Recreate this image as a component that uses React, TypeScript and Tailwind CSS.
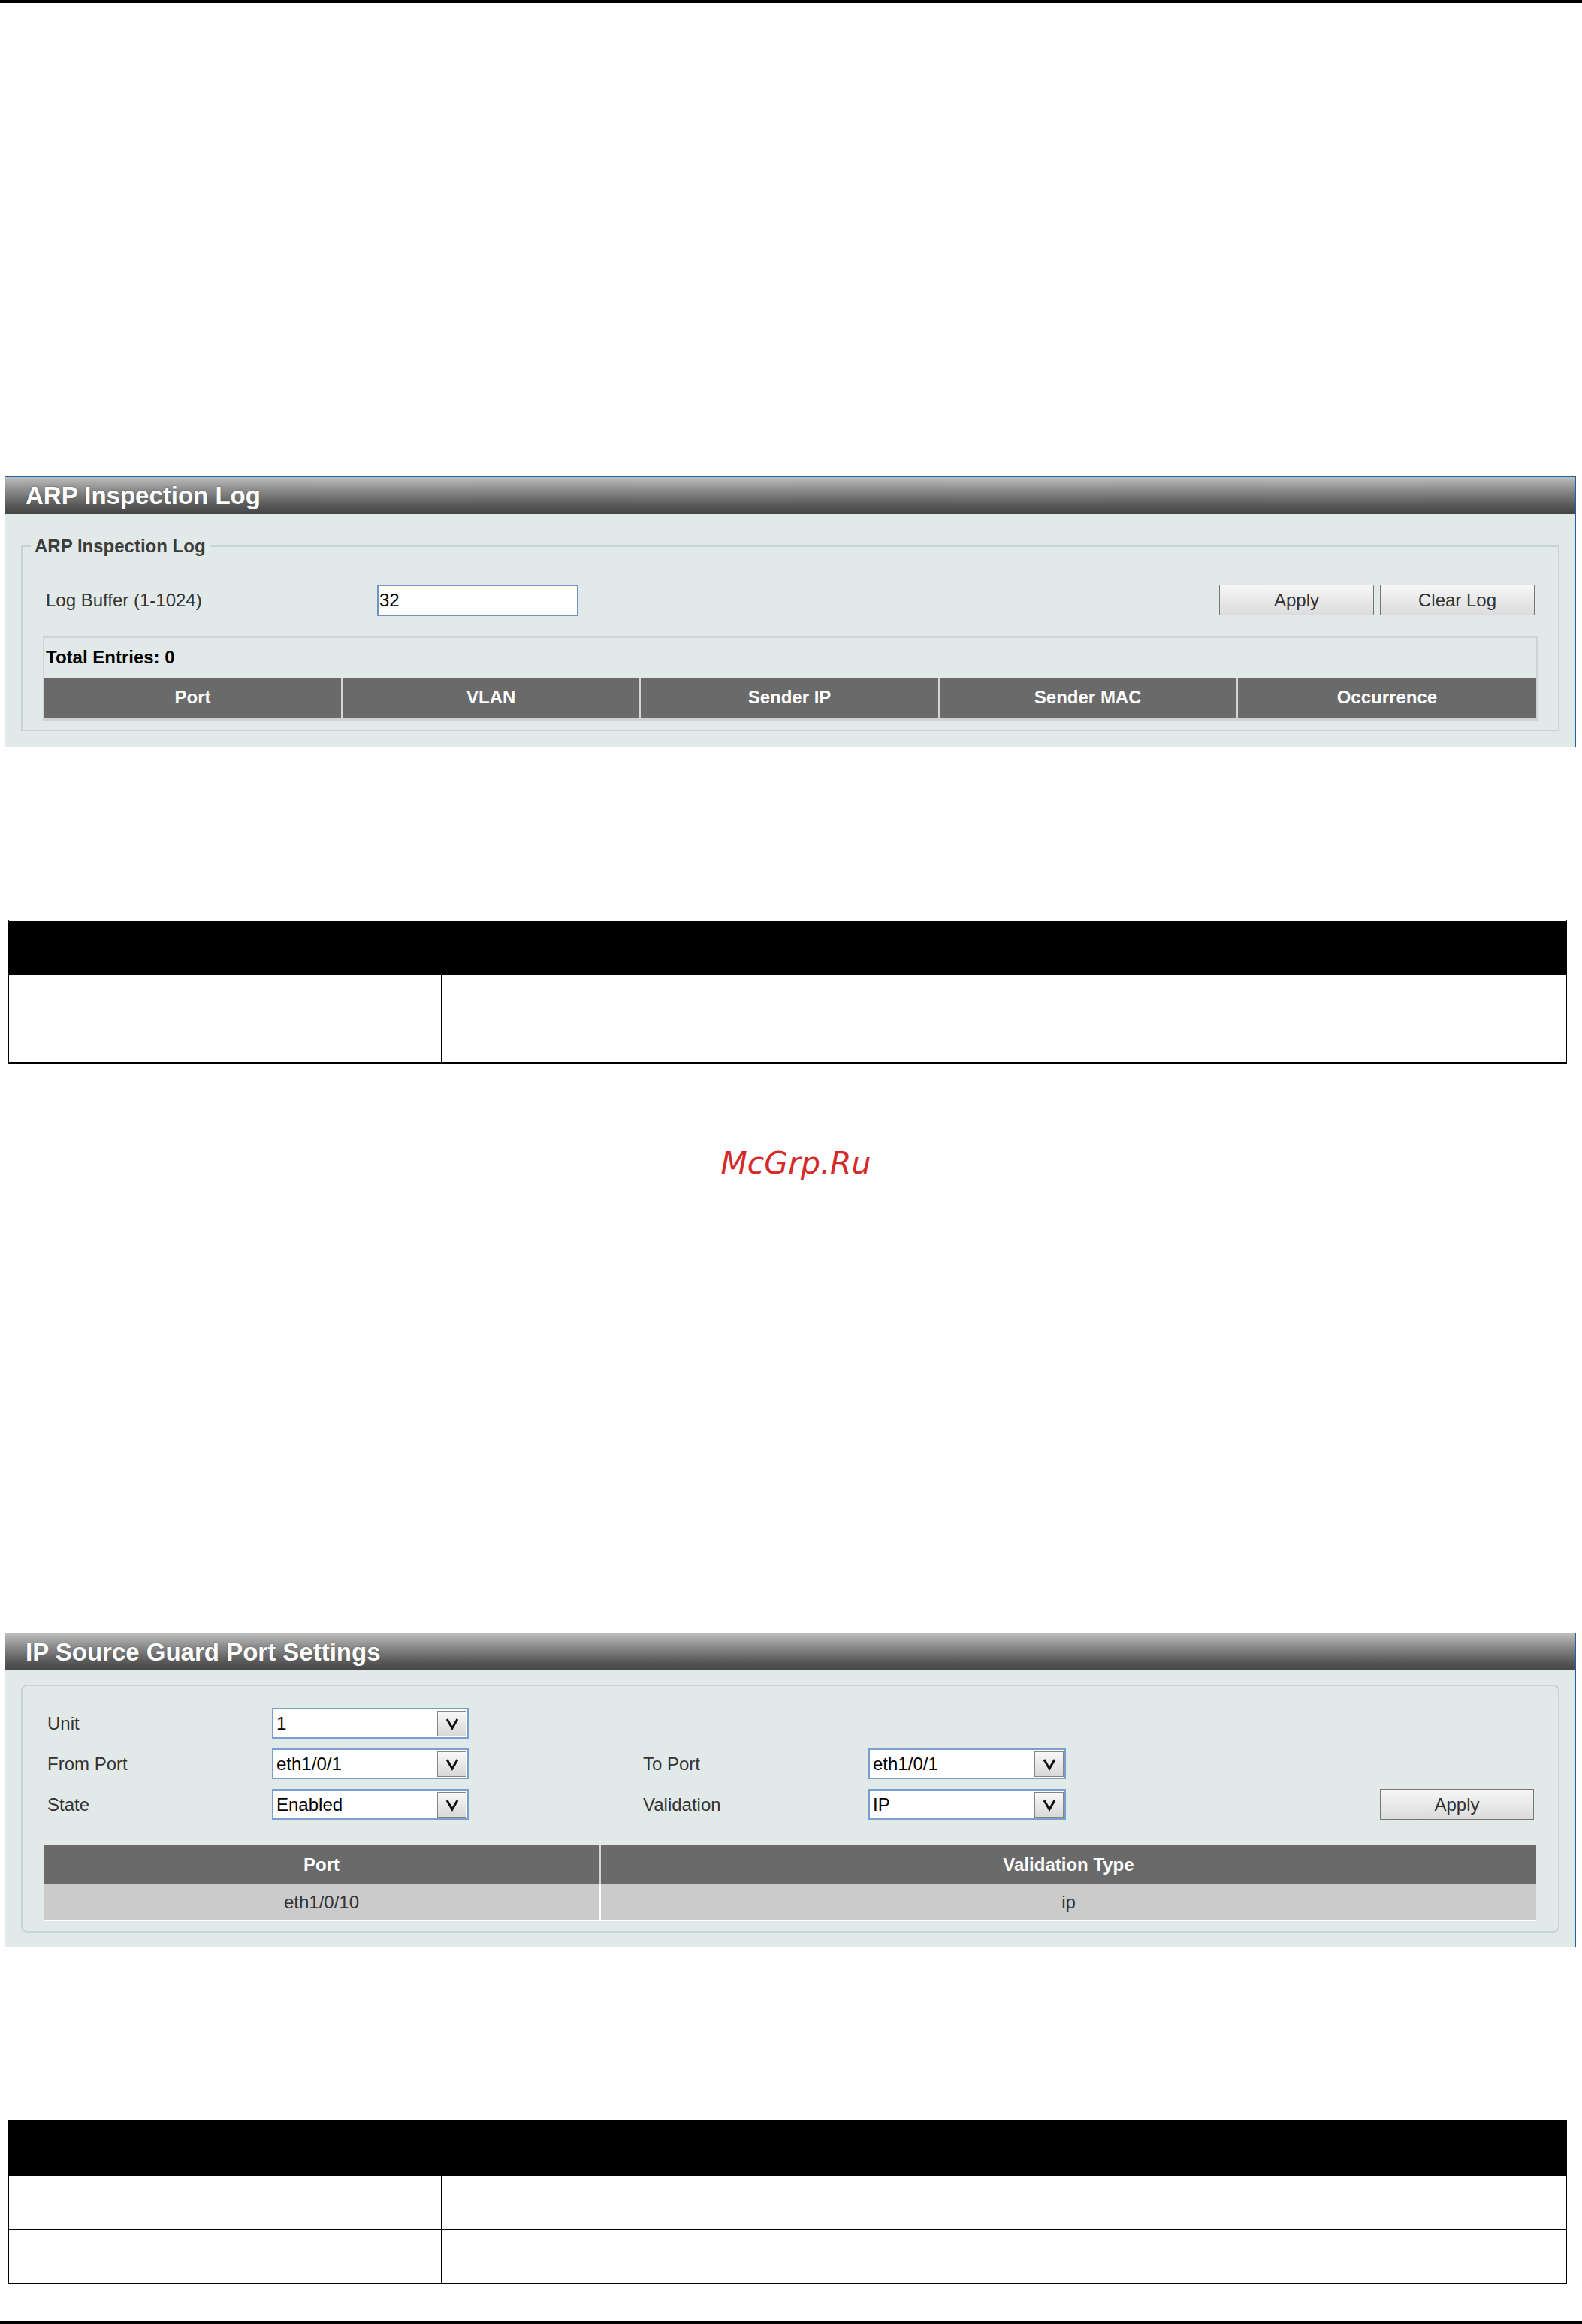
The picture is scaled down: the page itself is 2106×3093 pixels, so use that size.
import React from "react";

const titleBar =
  "flex h-[49px] items-center pl-[27px] bg-[linear-gradient(to_bottom,#bdbdbd_0%,#8c8c8c_35%,#5a5a5a_75%,#454545_100%)]";

function Panel({ title, bodyClass, children }: { title: string; bodyClass: string; children: React.ReactNode }) {
  return (
    <div className="ml-[6px] w-[2092px] border-x border-t border-[#1f6199]">
      <div className={titleBar}>
        <span className="text-[33px] font-bold text-white [text-shadow:0_0_2px_#555]">{title}</span>
      </div>
      <div className={"bg-[#e2eae9] px-[21px] " + bodyClass}>{children}</div>
    </div>
  );
}

function Button({ label, w }: { label: string; w: string }) {
  return (
    <div
      className={
        "flex h-[41px] items-center justify-center border border-[#767676] bg-[linear-gradient(to_bottom,#f6f6f6,#dcdcdc)] text-[#333] " +
        w
      }
    >
      {label}
    </div>
  );
}

function Select({ value, w }: { value: string; w: string }) {
  return (
    <div className={"flex h-[41px] items-center border-2 border-[#7b9fcc] bg-white " + w}>
      <span className="flex-1 pl-[4px] text-black">{value}</span>
      <div className="mr-[1px] flex h-[34px] w-[39px] items-center justify-center border border-[#858585] bg-[linear-gradient(to_bottom,#f8f8f8,#d8d8d8)]">
        <svg width="20" height="18" viewBox="0 0 20 18">
          <polyline points="3,3 10,15 17,3" fill="none" stroke="#111" strokeWidth="3" strokeLinejoin="miter" />
        </svg>
      </div>
    </div>
  );
}

function BlackTable({ rows, gap }: { rows: number; gap?: boolean }) {
  return (
    <div className="ml-[11px] w-[2075px] border-x border-black">
      {gap && (
        <>
          <div className="h-[1px] bg-black" />
          <div className="h-[1px] bg-white" />
        </>
      )}
      <div className={gap ? "h-[71px] bg-black" : "h-[74px] bg-black"} />
      {Array.from({ length: rows }).map((_, i) => (
        <div key={i} className={"grid grid-cols-[576px_1fr] border-b-2 border-black " + (rows === 1 ? "h-[119px]" : "h-[72px]")}>
          <div className="border-r border-black" />
          <div />
        </div>
      ))}
    </div>
  );
}

export default function App() {
  return (
    <div className="w-[2106px] bg-white font-['Liberation_Sans',Arial,sans-serif] text-[24px] leading-[1.15] text-[#333]">
      <div className="h-[4px] bg-black" />

      <div className="mt-[630px]">
        <Panel title="ARP Inspection Log" bodyClass="h-[310px] pt-[29px]">
          <fieldset className="border-2 border-[#c7d3d6]">
            <legend className="ml-[11px] px-[5px] font-bold text-[#3c3c3c]">ARP Inspection Log</legend>
            <div className="pb-[12px] pt-[37px]">
              <div className="flex h-[42px] items-center px-[31px]">
                <span className="w-[441px]">Log Buffer (1-1024)</span>
                <div className="flex h-[42px] w-[268px] items-center border-2 border-[#6f93c4] bg-white pl-[1px] text-black">32</div>
                <div className="ml-auto flex gap-[8px]">
                  <Button label="Apply" w="w-[206px]" />
                  <Button label="Clear Log" w="w-[206px]" />
                </div>
              </div>
              <div className="mx-[27px] mt-[27px]">
                <div className="border-x-2 border-t-2 border-[#cdd6d6]">
                  <div className="flex h-[53px] items-center pl-[2px] font-bold text-black">Total Entries: 0</div>
                  <div className="grid h-[53px] grid-cols-5 divide-x-2 divide-[#d4d4d4] bg-[#6a6a6a] font-bold text-white">
                    {["Port", "VLAN", "Sender IP", "Sender MAC", "Occurrence"].map((h) => (
                      <div key={h} className="flex items-center justify-center">
                        {h}
                      </div>
                    ))}
                  </div>
                </div>
                <div className="h-[4px] bg-[#cfd3d3]" />
              </div>
            </div>
          </fieldset>
        </Panel>
      </div>

      <div className="mt-[230px]">
        <BlackTable rows={1} gap />
      </div>

      <div className="mt-[108px] pl-[13px] text-center font-['DejaVu_Sans',Verdana,sans-serif] text-[41px] italic leading-[48px] text-[#d42a2a]">
        McGrp.Ru
      </div>

      <div className="mt-[601px]">
        <Panel title="IP Source Guard Port Settings" bodyClass="h-[368px] pt-[19px]">
          <div className="rounded-[8px] border-2 border-[#c7d3d6] pb-[13px] pt-[29px]">
            <div className="flex flex-col gap-[13px]">
              <div className="flex h-[41px] items-center pl-[33px] pr-[32px]">
                <span className="w-[299px]">Unit</span>
                <Select value="1" w="w-[262px]" />
              </div>
              <div className="flex h-[41px] items-center pl-[33px] pr-[32px]">
                <span className="w-[299px]">From Port</span>
                <Select value="eth1/0/1" w="w-[262px]" />
                <span className="ml-[232px] w-[300px]">To Port</span>
                <Select value="eth1/0/1" w="w-[263px]" />
              </div>
              <div className="flex h-[41px] items-center pl-[33px] pr-[32px]">
                <span className="w-[299px]">State</span>
                <Select value="Enabled" w="w-[262px]" />
                <span className="ml-[232px] w-[300px]">Validation</span>
                <Select value="IP" w="w-[263px]" />
                <div className="ml-auto">
                  <Button label="Apply" w="w-[205px]" />
                </div>
              </div>
            </div>
            <div className="ml-[28px] mr-[29px] mt-[34px]">
              <div className="grid h-[52px] grid-cols-[742px_1fr] bg-[#6a6a6a] font-bold text-white">
                <div className="flex items-center justify-center border-r-2 border-[#d4d4d4]">Port</div>
                <div className="flex items-center justify-center">Validation Type</div>
              </div>
              <div className="grid h-[49px] grid-cols-[742px_1fr] border-b-2 border-white bg-[#cbcbcb] text-[#333]">
                <div className="flex items-center justify-center border-r-2 border-white">eth1/0/10</div>
                <div className="flex items-center justify-center">ip</div>
              </div>
            </div>
          </div>
        </Panel>
      </div>

      <div className="mt-[231px]">
        <BlackTable rows={2} />
      </div>

      <div className="mt-[49px] h-[4px] bg-black" />
    </div>
  );
}
